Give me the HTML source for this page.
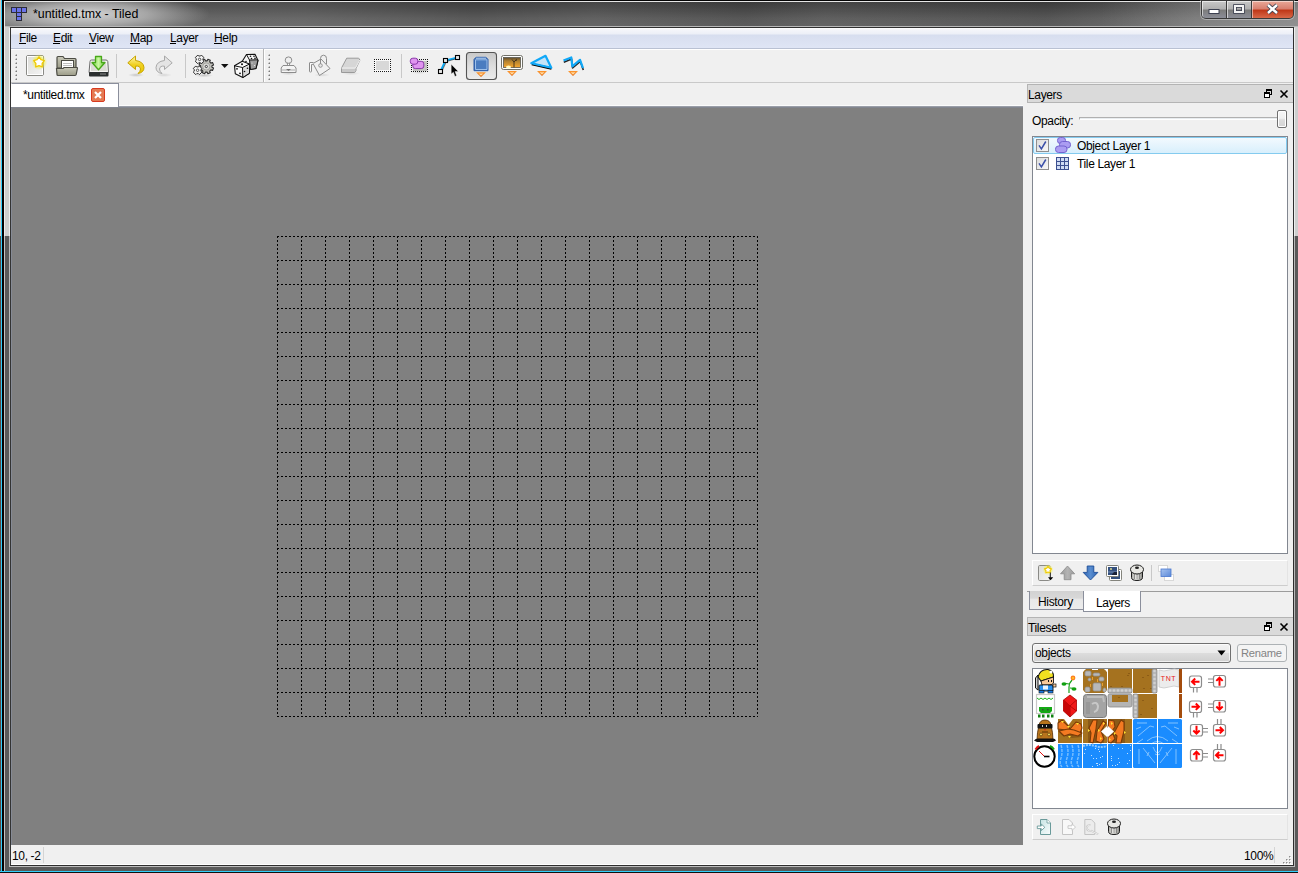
<!DOCTYPE html>
<html><head><meta charset="utf-8">
<style>
*{box-sizing:border-box;margin:0;padding:0}
html,body{width:1298px;height:873px;overflow:hidden}
body{position:relative;background:#626262;font-family:"Liberation Sans",sans-serif;font-size:11.5px;color:#000}
.a{position:absolute}
.t{position:absolute;white-space:nowrap;line-height:14px;font-size:12px;letter-spacing:-0.35px}
svg{position:absolute;overflow:visible}
</style></head><body>

<!-- ===== window frame ===== -->
<div class="a" style="left:0;top:0;width:1298px;height:873px;background:#5a5a5a"></div>
<div class="a" style="left:0;top:0;width:1298px;height:236px;background:#cecece"></div>
<!-- left edge columns -->
<div class="a" style="left:0;top:0;width:1px;height:873px;background:linear-gradient(#dcc8c0 236px,#5a4a46 236px)"></div>
<div class="a" style="left:1px;top:0;width:1px;height:873px;background:#30cdfa"></div>
<div class="a" style="left:2px;top:0;width:2px;height:873px;background:#050000"></div>
<div class="a" style="left:4px;top:0;width:1px;height:873px;background:linear-gradient(#eeeeee 236px,#c4c4c4 236px)"></div>
<div class="a" style="left:9px;top:28px;width:1px;height:839px;background:linear-gradient(#eeeeee 208px,#b8b8b8 208px)"></div>
<div class="a" style="left:10px;top:27px;width:1px;height:839px;background:#333"></div>
<!-- right edge -->
<div class="a" style="left:1293px;top:27px;width:1px;height:839px;background:#2e2e2e"></div>
<div class="a" style="left:1294px;top:28px;width:1px;height:838px;background:linear-gradient(#eeeeee 208px,#b8b8b8 208px)"></div>
<!-- bottom edge -->
<div class="a" style="left:10px;top:865px;width:1284px;height:1px;background:#2e2e2e"></div>
<div class="a" style="left:9px;top:866px;width:1286px;height:1px;background:#bdbdbd"></div>
<div class="a" style="left:0;top:871px;width:1298px;height:1px;background:#30cdfa"></div>
<div class="a" style="left:0;top:872px;width:1298px;height:1px;background:#101010"></div>

<!-- ===== title bar ===== -->
<div class="a" style="left:4px;top:0;width:1294px;height:1px;background:#050505"></div>
<div class="a" style="left:4px;top:1px;width:1294px;height:1px;background:#e6e6e6"></div>
<div class="a" id="title" style="left:5px;top:2px;width:1293px;height:24px;background:linear-gradient(to right,rgba(255,255,255,.08) 0,rgba(255,255,255,.09) 300px,rgba(255,255,255,0) 470px,rgba(255,255,255,.05) 590px,rgba(0,0,0,.03) 740px,rgba(255,255,255,.04) 820px,rgba(0,0,0,.03) 1040px,rgba(255,255,255,.14) 1190px),linear-gradient(#3c3c3c,#484848 30%,#5a5a5a 70%,#5e5e5e)"></div>
<div class="a" style="left:5px;top:26px;width:1293px;height:1px;background:#b8b8b8"></div>
<div class="a" style="left:10px;top:27px;width:1284px;height:1px;background:#303030"></div>

<!-- ===== client area ===== -->
<div class="a" style="left:11px;top:28px;width:1282px;height:837px;background:#f0f0f0"></div>

<!-- menu bar -->
<div class="a" style="left:11px;top:28px;width:1282px;height:20px;background:linear-gradient(#fff 0,#f4f5fa 2px,#eceff7 6px,#d7deef 7px,#dfe5f5 100%)"></div>
<div class="a" style="left:11px;top:48px;width:1282px;height:1px;background:#b9c1d3"></div>
<div class="a" style="left:11px;top:49px;width:1282px;height:1px;background:#fff"></div>

<!-- toolbar bottom -->
<div class="a" style="left:11px;top:82px;width:1282px;height:1px;background:#c9c9c9"></div>

<!-- map view -->
<div class="a" style="left:11px;top:107px;width:1012px;height:738px;background:#808080;border-left:1px solid #858a95;border-top:1px solid #82868f"></div>

<!-- status bar -->
<div class="a" style="left:11px;top:845px;width:1282px;height:20px;background:#f0f0f0"></div>


<!-- grid -->
<svg class="a" style="left:0;top:0" width="1298" height="873" shape-rendering="crispEdges"><path d="M277 236.5H758 M277 260.5H758 M277 284.5H758 M277 308.5H758 M277 332.5H758 M277 356.5H758 M277 380.5H758 M277 404.5H758 M277 428.5H758 M277 452.5H758 M277 476.5H758 M277 500.5H758 M277 524.5H758 M277 548.5H758 M277 572.5H758 M277 596.5H758 M277 620.5H758 M277 644.5H758 M277 668.5H758 M277 692.5H758 M277 716.5H758 M277.5 236V717 M301.5 236V717 M325.5 236V717 M349.5 236V717 M373.5 236V717 M397.5 236V717 M421.5 236V717 M445.5 236V717 M469.5 236V717 M493.5 236V717 M517.5 236V717 M541.5 236V717 M565.5 236V717 M589.5 236V717 M613.5 236V717 M637.5 236V717 M661.5 236V717 M685.5 236V717 M709.5 236V717 M733.5 236V717 M757.5 236V717" stroke="#000" stroke-width="1" stroke-dasharray="2 2" fill="none"/></svg>

<!-- title content -->
<div class="a" style="left:5px;top:2px;width:260px;height:24px;background:radial-gradient(ellipse 125px 21px at 80px 12px,rgba(220,220,220,.95),rgba(195,195,195,.7) 50%,rgba(150,150,150,0) 100%)"></div>
<svg style="left:0;top:0" width="40" height="30" shape-rendering="crispEdges">
<rect x="11" y="7" width="16" height="6" fill="#2c2c38"/><rect x="16" y="12" width="6" height="9" fill="#2c2c38"/>
<rect x="12" y="8" width="4" height="4" fill="#6c74e8"/><rect x="17" y="8" width="4" height="4" fill="#6c74e8"/><rect x="22" y="8" width="4" height="4" fill="#6c74e8"/>
<rect x="17" y="13" width="4" height="3" fill="#6c74e8"/><rect x="17" y="17" width="4" height="3" fill="#6c74e8"/>
</svg>
<div class="t" style="left:33px;top:7px;font-size:12.4px;letter-spacing:0;color:#000">*untitled.tmx - Tiled</div>

<!-- window buttons -->
<div class="a" style="left:1100px;top:2px;width:198px;height:24px;background:linear-gradient(to right,rgba(255,255,255,0),rgba(255,255,255,.12) 60%,rgba(255,255,255,.2))"></div>
<div class="a" style="left:1200px;top:0;width:95px;height:20px;background:rgba(255,255,255,.35);border-radius:0 0 6px 6px"></div>
<div class="a" style="left:1201px;top:0;width:93px;height:19px;background:#3a3a3a;border-radius:0 0 5px 5px"></div>
<div class="a" style="left:1202px;top:1px;width:24px;height:17px;border-radius:0 0 0 4px;background:linear-gradient(#c8c8c8,#b0b0b0 45%,#7c7c7c 55%,#8c8e98);box-shadow:inset 1px 1px 0 rgba(255,255,255,.6)"></div>
<div class="a" style="left:1227px;top:1px;width:24px;height:17px;background:linear-gradient(#c8c8c8,#b0b0b0 45%,#7c7c7c 55%,#8c8e98);box-shadow:inset 1px 1px 0 rgba(255,255,255,.6)"></div>
<div class="a" style="left:1252px;top:1px;width:41px;height:17px;border-radius:0 0 4px 0;background:linear-gradient(#eaa898,#d88070 45%,#c03818 55%,#d86848);box-shadow:inset 1px 1px 0 rgba(255,255,255,.5)"></div>
<svg style="left:0;top:0" width="1298" height="30">
<rect x="1209" y="9.5" width="10" height="4" fill="#fff" stroke="#3c4050" stroke-width="1"/>
<rect x="1235" y="6" width="8" height="6" fill="none" stroke="#3c4050" stroke-width="3.6"/>
<rect x="1235" y="6" width="8" height="6" fill="none" stroke="#f4f4f4" stroke-width="2"/>
<path d="M1268 5L1277 13M1277 5L1268 13" stroke="#3c4050" stroke-width="4.2"/>
<path d="M1268 5L1277 13M1277 5L1268 13" stroke="#fff" stroke-width="2.4"/>
</svg>

<!-- menu -->
<div class="t" style="left:19px;top:31px">File</div>
<div class="t" style="left:53px;top:31px">Edit</div>
<div class="t" style="left:89px;top:31px">View</div>
<div class="t" style="left:130px;top:31px">Map</div>
<div class="t" style="left:170px;top:31px">Layer</div>
<div class="t" style="left:214px;top:31px">Help</div>
<div class="a" style="left:19px;top:43px;width:7px;height:1px;background:#000"></div>
<div class="a" style="left:53px;top:43px;width:7px;height:1px;background:#000"></div>
<div class="a" style="left:89px;top:43px;width:7px;height:1px;background:#000"></div>
<div class="a" style="left:130px;top:43px;width:10px;height:1px;background:#000"></div>
<div class="a" style="left:170px;top:43px;width:6px;height:1px;background:#000"></div>
<div class="a" style="left:214px;top:43px;width:8px;height:1px;background:#000"></div>

<!-- document tab -->
<div class="a" style="left:11px;top:83px;width:108px;height:24px;background:#fff;border:1px solid #8b8f9c;border-bottom:none;border-left-color:#fff"></div>
<div class="a" style="left:119px;top:105px;width:904px;height:1px;background:#fbfbfb"></div><div class="a" style="left:119px;top:106px;width:904px;height:1px;background:#9a9ea8"></div>
<div class="t" style="left:23px;top:88px">*untitled.tmx</div>
<div class="a" style="left:91px;top:88px;width:14px;height:14px;background:#e47a52;border:1px solid #d83a20;border-radius:2px"></div>
<svg style="left:0;top:0" width="120" height="110"><path d="M95 92L101 98M101 92L95 98" stroke="#fff" stroke-width="2.2"/></svg>


<!-- toolbar decorations -->
<div class="a" style="left:263px;top:49px;width:1px;height:33px;background:#b4b4b4"></div>
<div class="a" style="left:264px;top:49px;width:1px;height:33px;background:#fff"></div>
<svg style="left:0;top:0" width="600" height="90" shape-rendering="crispEdges"><rect x="15" y="54" width="2" height="2" fill="#b4b4b4"/><rect x="16" y="55" width="1" height="1" fill="#7c7c7c"/><rect x="15" y="54" width="1" height="1" fill="#e4e4e4"/><rect x="15" y="58" width="2" height="2" fill="#b4b4b4"/><rect x="16" y="59" width="1" height="1" fill="#7c7c7c"/><rect x="15" y="58" width="1" height="1" fill="#e4e4e4"/><rect x="15" y="62" width="2" height="2" fill="#b4b4b4"/><rect x="16" y="63" width="1" height="1" fill="#7c7c7c"/><rect x="15" y="62" width="1" height="1" fill="#e4e4e4"/><rect x="15" y="66" width="2" height="2" fill="#b4b4b4"/><rect x="16" y="67" width="1" height="1" fill="#7c7c7c"/><rect x="15" y="66" width="1" height="1" fill="#e4e4e4"/><rect x="15" y="70" width="2" height="2" fill="#b4b4b4"/><rect x="16" y="71" width="1" height="1" fill="#7c7c7c"/><rect x="15" y="70" width="1" height="1" fill="#e4e4e4"/><rect x="15" y="74" width="2" height="2" fill="#b4b4b4"/><rect x="16" y="75" width="1" height="1" fill="#7c7c7c"/><rect x="15" y="74" width="1" height="1" fill="#e4e4e4"/><rect x="15" y="78" width="2" height="2" fill="#b4b4b4"/><rect x="16" y="79" width="1" height="1" fill="#7c7c7c"/><rect x="15" y="78" width="1" height="1" fill="#e4e4e4"/><rect x="268" y="54" width="2" height="2" fill="#b4b4b4"/><rect x="269" y="55" width="1" height="1" fill="#7c7c7c"/><rect x="268" y="54" width="1" height="1" fill="#e4e4e4"/><rect x="268" y="58" width="2" height="2" fill="#b4b4b4"/><rect x="269" y="59" width="1" height="1" fill="#7c7c7c"/><rect x="268" y="58" width="1" height="1" fill="#e4e4e4"/><rect x="268" y="62" width="2" height="2" fill="#b4b4b4"/><rect x="269" y="63" width="1" height="1" fill="#7c7c7c"/><rect x="268" y="62" width="1" height="1" fill="#e4e4e4"/><rect x="268" y="66" width="2" height="2" fill="#b4b4b4"/><rect x="269" y="67" width="1" height="1" fill="#7c7c7c"/><rect x="268" y="66" width="1" height="1" fill="#e4e4e4"/><rect x="268" y="70" width="2" height="2" fill="#b4b4b4"/><rect x="269" y="71" width="1" height="1" fill="#7c7c7c"/><rect x="268" y="70" width="1" height="1" fill="#e4e4e4"/><rect x="268" y="74" width="2" height="2" fill="#b4b4b4"/><rect x="269" y="75" width="1" height="1" fill="#7c7c7c"/><rect x="268" y="74" width="1" height="1" fill="#e4e4e4"/><rect x="268" y="78" width="2" height="2" fill="#b4b4b4"/><rect x="269" y="79" width="1" height="1" fill="#7c7c7c"/><rect x="268" y="78" width="1" height="1" fill="#e4e4e4"/>
<rect x="116" y="54" width="1" height="24" fill="#c8c8c8"/>
<rect x="185" y="54" width="1" height="24" fill="#c8c8c8"/>
<rect x="401" y="54" width="1" height="24" fill="#c8c8c8"/>
</svg>

<!-- toolbar icons -->
<svg style="left:0;top:0" width="600" height="90">
<defs>
<linearGradient id="gpage" x1="0" y1="0" x2="1" y2="1"><stop offset="0" stop-color="#dcdcd8"/><stop offset="1" stop-color="#f4f4f4"/></linearGradient>
<radialGradient id="gglow"><stop offset="0" stop-color="#f0f040" stop-opacity=".9"/><stop offset=".6" stop-color="#f0f040" stop-opacity=".6"/><stop offset="1" stop-color="#f0f040" stop-opacity="0"/></radialGradient>
<linearGradient id="gfold" x1="0" y1="0" x2="0" y2="1"><stop offset="0" stop-color="#c8c8b8"/><stop offset="1" stop-color="#9c9c88"/></linearGradient>
<linearGradient id="ggreen" x1="0" y1="0" x2="1" y2="0"><stop offset="0" stop-color="#70d040"/><stop offset=".5" stop-color="#c8f8a0"/><stop offset="1" stop-color="#60c030"/></linearGradient>
<linearGradient id="gyel" x1="0" y1="0" x2="0" y2="1"><stop offset="0" stop-color="#fff8b0"/><stop offset=".5" stop-color="#f0d020"/><stop offset="1" stop-color="#e8c800"/></linearGradient>
<radialGradient id="gshadow"><stop offset="0" stop-color="#000" stop-opacity=".18"/><stop offset="1" stop-color="#000" stop-opacity="0"/></radialGradient>
<linearGradient id="gbtn" x1="0" y1="0" x2="0" y2="1"><stop offset="0" stop-color="#c8c8c8"/><stop offset=".5" stop-color="#dedede"/><stop offset="1" stop-color="#ececec"/></linearGradient>
<linearGradient id="gsun" x1="0" y1="0" x2="0" y2="1"><stop offset="0" stop-color="#5a4a30"/><stop offset=".35" stop-color="#b08030"/><stop offset="1" stop-color="#f8a830"/></linearGradient>
<linearGradient id="gorange" x1="0" y1="0" x2="0" y2="1"><stop offset="0" stop-color="#ff9a30"/><stop offset="1" stop-color="#e06000"/></linearGradient>
</defs>
<!-- new -->
<rect x="26.5" y="55.5" width="17" height="20" rx="1.5" fill="url(#gpage)" stroke="#8a8a86"/>
<rect x="27.5" y="56.5" width="15" height="18" fill="none" stroke="#fff"/>
<circle cx="39.2" cy="62.1" r="8" fill="url(#gglow)"/>
<path d="M39.00 56.80L40.94 59.73L44.33 60.67L42.14 63.42L42.29 66.93L39.00 65.70L35.71 66.93L35.86 63.42L33.67 60.67L37.06 59.73Z" fill="#fff" stroke="#f0c800" stroke-width="1.3" stroke-linejoin="round"/>
<!-- open -->
<path d="M57 57.5Q57 56.5 58 56.5H63L64.5 58.5H75Q76 58.5 76 59.5V68H57Z" fill="url(#gfold)" stroke="#4c4c44" stroke-width="1.2"/>
<rect x="61.5" y="60.5" width="12" height="8" fill="#fff" stroke="#4c4c44" stroke-width="1"/>
<path d="M63 63.5H72M63 65.5H72" stroke="#b8b8b8" stroke-width="0.9"/>
<path d="M56.5 68.5H63L64 67.5H77Q77.6 67.5 77.4 68.3L76.2 74.5Q76 75.5 75 75.5H58Q57 75.5 57 74.5Z" fill="url(#gfold)" stroke="#4c4c44" stroke-width="1.2"/>
<!-- save -->
<path d="M90 61.5Q90 60 91.5 60H106Q107.5 60 107.8 61.5L108.5 72.5H89Z" fill="#f6f6f4" stroke="#6c6c6c" stroke-width="1"/>
<path d="M91 63L106 63L107 71H91Z" fill="#dcdcd6"/>
<rect x="89" y="72" width="19.5" height="4.5" rx="1" fill="#2c3030"/>
<rect x="100" y="73.5" width="6" height="1" fill="#8a8a8a"/>
<path d="M95.5 56.5H101.5V62.5H105L98.5 69.8L92 62.5H95.5Z" fill="url(#ggreen)" stroke="#48a818" stroke-width="1.3" stroke-linejoin="round"/>
<!-- undo -->
<ellipse cx="136" cy="75" rx="8" ry="2" fill="url(#gshadow)"/>
<path d="M135.5 56L127.8 62.8L135.5 69.5V66.2Q140 65.5 140.5 69Q140.5 71.5 138 73.5Q144 72.5 144 67.5Q143.5 61.5 135.5 60.5Z" fill="url(#gyel)" stroke="#c8a400" stroke-width="1" stroke-linejoin="round"/>
<!-- redo -->
<ellipse cx="164" cy="75" rx="8" ry="2" fill="url(#gshadow)" opacity=".6"/>
<path d="M164.5 56L172.2 62.8L164.5 69.5V66.2Q160 65.5 159.5 69Q159.5 71.5 162 73.5Q156 72.5 156 67.5Q156.5 61.5 164.5 60.5Z" fill="#e4e4e4" stroke="#a8a8a8" stroke-width="1" stroke-linejoin="round"/>
<!-- gears -->
<ellipse cx="204" cy="75.5" rx="9" ry="1.8" fill="url(#gshadow)"/>
<path d="M211.93 67.37L213.53 68.09L212.53 70.49L210.90 69.87L209.67 71.10L210.29 72.73L207.89 73.73L207.17 72.13L205.43 72.13L204.71 73.73L202.31 72.73L202.93 71.10L201.70 69.87L200.07 70.49L199.07 68.09L200.67 67.37L200.67 65.63L199.07 64.91L200.07 62.51L201.70 63.13L202.93 61.90L202.31 60.27L204.71 59.27L205.43 60.87L207.17 60.87L207.89 59.27L210.29 60.27L209.67 61.90L210.90 63.13L212.53 62.51L213.53 64.91L211.93 65.63Z" fill="#c4c4be" stroke="#2c2c2c" stroke-width="1.1" stroke-linejoin="round"/>
<circle cx="206.3" cy="66.5" r="3.6" fill="#d8d8d4" stroke="#9a9a96" stroke-width=".8"/>
<circle cx="206.3" cy="66.5" r="1.1" fill="#fff" stroke="#303030" stroke-width=".9"/>
<path d="M202.98 60.32L203.94 61.20L201.40 63.74L200.52 62.78L198.68 62.78L197.80 63.74L195.26 61.20L196.22 60.32L196.22 58.48L195.26 57.60L197.80 55.06L198.68 56.02L200.52 56.02L201.40 55.06L203.94 57.60L202.98 58.48Z" fill="#f2f2f2" stroke="#2c2c2c" stroke-width="1" stroke-linejoin="round"/>
<circle cx="199.6" cy="59.4" r="1.2" fill="#fff" stroke="#404040" stroke-width=".9"/>
<path d="M200.98 71.22L201.94 72.10L199.40 74.64L198.52 73.68L196.68 73.68L195.80 74.64L193.26 72.10L194.22 71.22L194.22 69.38L193.26 68.50L195.80 65.96L196.68 66.92L198.52 66.92L199.40 65.96L201.94 68.50L200.98 69.38Z" fill="#f2f2f2" stroke="#2c2c2c" stroke-width="1" stroke-linejoin="round"/>
<circle cx="197.6" cy="70.3" r="1.2" fill="#fff" stroke="#404040" stroke-width=".9"/>
<path d="M221 64H228.5L224.7 68Z" fill="#111"/>
<!-- dice -->
<path d="M241.5 62.5L246.5 54.5L255 54.3L258 60.5L256 68.5L250 69.5Z" fill="#f6f6f6" stroke="#111" stroke-width="1.1" stroke-linejoin="round"/>
<path d="M249.5 60L258 59.8L256 68.5L250.5 69.5Z" fill="#9c9c9c" stroke="#111" stroke-width="1" stroke-linejoin="round"/>
<path d="M246.5 54.5L249.5 60" stroke="#111" stroke-width="1"/>
<g fill="#111"><circle cx="250.5" cy="56.3" r=".8"/><circle cx="254" cy="56.3" r=".8"/><circle cx="251.5" cy="58.5" r=".8"/><circle cx="255" cy="58.4" r=".8"/><circle cx="246" cy="61.5" r=".8"/></g>
<g fill="#eee"><circle cx="252" cy="63" r=".6"/><circle cx="254.5" cy="65.5" r=".6"/></g>
<path d="M234.5 65.8L242.2 61.2L249.5 64V73.2L242.8 77.5L235.3 73.8Z" fill="#fbfbfb" stroke="#111" stroke-width="1.1" stroke-linejoin="round"/>
<path d="M242.5 67.5L249.5 64V73.2L242.8 77.5Z" fill="#dcdcdc" stroke="#111" stroke-width="1" stroke-linejoin="round"/>
<path d="M234.5 65.8L242.5 67.5" stroke="#111" stroke-width="1"/>
<g fill="#111"><circle cx="242" cy="64.3" r="1"/><circle cx="237" cy="68.8" r=".9"/><circle cx="240" cy="73.3" r=".9"/><circle cx="244.5" cy="71.5" r=".8"/><circle cx="247.5" cy="68.3" r=".8"/></g>
<!-- stamp -->
<ellipse cx="288.5" cy="73.5" rx="8" ry="1.8" fill="url(#gshadow)" opacity=".6"/>
<circle cx="288.5" cy="60.2" r="3.3" fill="#f0f0f0" stroke="#8c8c8c" stroke-width="1"/>
<rect x="287.5" y="63.2" width="2" height="3" fill="#fff" stroke="#8c8c8c" stroke-width=".9"/>
<path d="M283 65.5H294L296 68V72.5H281.2V68Z" fill="#f4f4f4" stroke="#8c8c8c" stroke-width="1"/>
<rect x="282" y="69" width="13.5" height="2" fill="#cfcfcf"/>
<path d="M286 69.3H291L288.5 70.8Z" fill="#555"/>
<!-- fill bucket -->
<ellipse cx="322" cy="75" rx="8" ry="1.8" fill="url(#gshadow)" opacity=".6"/>
<path d="M313 63.5L321 59L330 68.5L319.5 75.5Z" fill="#f0f0f0" stroke="#8c8c8c" stroke-width="1" stroke-linejoin="round"/>
<path d="M320.5 65.5V58.5Q320.5 55.2 323.5 55.2Q326.5 55.2 326.5 58.5V64" fill="none" stroke="#8c8c8c" stroke-width="1"/>
<circle cx="320.5" cy="65.5" r="1.8" fill="#e8e8e8" stroke="#8c8c8c" stroke-width=".9"/>
<path d="M313.5 62.5H310Q309.5 62.5 309.5 63V71.5Q309.5 72 310.5 72Q311.5 72 311.5 71.5V64.5L313.5 64.2" fill="#fafafa" stroke="#8c8c8c" stroke-width="1"/>
<!-- eraser -->
<ellipse cx="351" cy="73.5" rx="9" ry="1.8" fill="url(#gshadow)" opacity=".5"/>
<path d="M346.7 58.2H358.3Q360 58.5 359.7 60.5L356 68.5V70.5L354.7 72.5H341.5V68Z" fill="#d6d6d6" stroke="#9a9a9a" stroke-width="1" stroke-linejoin="round"/>
<path d="M341.5 68H355.5L359.7 60" fill="none" stroke="#f4f4f4" stroke-width=".9"/>
<path d="M342 69H355V72H342Z" fill="#c8c8c8"/>
<!-- rect select -->
<rect x="376" y="61" width="13" height="9" fill="#d8d8d8"/>
<rect x="375" y="60" width="15" height="11" fill="none" stroke="#fff" stroke-width="1"/>
<g fill="#1a1a1a" shape-rendering="crispEdges"><rect x="374" y="59" width="1" height="1"/><rect x="374" y="71" width="1" height="1"/><rect x="376" y="59" width="1" height="1"/><rect x="376" y="71" width="1" height="1"/><rect x="378" y="59" width="1" height="1"/><rect x="378" y="71" width="1" height="1"/><rect x="380" y="59" width="1" height="1"/><rect x="380" y="71" width="1" height="1"/><rect x="382" y="59" width="1" height="1"/><rect x="382" y="71" width="1" height="1"/><rect x="384" y="59" width="1" height="1"/><rect x="384" y="71" width="1" height="1"/><rect x="386" y="59" width="1" height="1"/><rect x="386" y="71" width="1" height="1"/><rect x="388" y="59" width="1" height="1"/><rect x="388" y="71" width="1" height="1"/><rect x="390" y="59" width="1" height="1"/><rect x="390" y="71" width="1" height="1"/><rect x="374" y="61" width="1" height="1"/><rect x="390" y="61" width="1" height="1"/><rect x="374" y="63" width="1" height="1"/><rect x="390" y="63" width="1" height="1"/><rect x="374" y="65" width="1" height="1"/><rect x="390" y="65" width="1" height="1"/><rect x="374" y="67" width="1" height="1"/><rect x="390" y="67" width="1" height="1"/><rect x="374" y="69" width="1" height="1"/><rect x="390" y="69" width="1" height="1"/></g>
<!-- object select -->
<ellipse cx="419" cy="72.5" rx="8" ry="1.5" fill="url(#gshadow)" opacity=".6"/>
<rect x="413" y="61" width="14" height="10" fill="#c4c4c0"/>
<g fill="#111" shape-rendering="crispEdges"><rect x="411" y="59" width="1" height="1"/><rect x="411" y="71" width="1" height="1"/><rect x="413" y="59" width="1" height="1"/><rect x="413" y="71" width="1" height="1"/><rect x="415" y="59" width="1" height="1"/><rect x="415" y="71" width="1" height="1"/><rect x="417" y="59" width="1" height="1"/><rect x="417" y="71" width="1" height="1"/><rect x="419" y="59" width="1" height="1"/><rect x="419" y="71" width="1" height="1"/><rect x="421" y="59" width="1" height="1"/><rect x="421" y="71" width="1" height="1"/><rect x="423" y="59" width="1" height="1"/><rect x="423" y="71" width="1" height="1"/><rect x="425" y="59" width="1" height="1"/><rect x="425" y="71" width="1" height="1"/><rect x="427" y="59" width="1" height="1"/><rect x="427" y="71" width="1" height="1"/><rect x="411" y="61" width="1" height="1"/><rect x="427" y="61" width="1" height="1"/><rect x="411" y="63" width="1" height="1"/><rect x="427" y="63" width="1" height="1"/><rect x="411" y="65" width="1" height="1"/><rect x="427" y="65" width="1" height="1"/><rect x="411" y="67" width="1" height="1"/><rect x="427" y="67" width="1" height="1"/><rect x="411" y="69" width="1" height="1"/><rect x="427" y="69" width="1" height="1"/></g>
<rect x="412.8" y="61.3" width="11" height="7.3" rx="2.5" fill="#e094f0" stroke="#8838a8" stroke-width="1"/>
<rect x="410.3" y="58.2" width="7.5" height="6" rx="2.5" fill="#e094f0" stroke="#8838a8" stroke-width="1"/>
<!-- edit polygon -->
<path d="M440.5 71.5L445.5 60.5L457.5 57.5" fill="none" stroke="#10a8f0" stroke-width="2"/>
<path d="M442 71L446.5 61.5L457 58.5" fill="none" stroke="#000" stroke-width=".7" opacity=".7"/>
<g fill="#e8e8e8" stroke="#000" stroke-width="1.1"><rect x="438.5" y="69.5" width="4" height="4"/><rect x="443.5" y="58.5" width="4" height="4"/><rect x="455.5" y="55.5" width="4" height="4"/></g>
<path d="M451.2 64.3V74L453.4 72.2L455 76.4L456.6 75.6L455 71.6L458.3 71.4Z" fill="#000" stroke="#fff" stroke-width=".4"/>
<!-- active button -->
<rect x="466.5" y="52.5" width="30" height="27" rx="3" fill="url(#gbtn)" stroke="#555" stroke-width="1.1"/>
<path d="M476 57.3H486L488 59.5V70.7H474V59.5Z" fill="#3c6eb4" stroke="#2a5aa8" stroke-width="1"/>
<path d="M475.5 59.8H487V69.5H475.5Z" fill="#4a7cc0" stroke="#a8c8ee" stroke-width=".9"/>
<path d="M476 58.2H486" stroke="#c0d8f4" stroke-width="1"/>
<path d="M476 72.3H486L481 77Z" fill="url(#gorange)"/>
<path d="M478.5 73.5H483.5L481 75.8Z" fill="#ffd8a0"/>
<!-- insert image -->
<rect x="501.5" y="55.5" width="21" height="14" rx="2" fill="#fff" stroke="#707068" stroke-width="1"/>
<rect x="503.5" y="57.5" width="17" height="10" fill="url(#gsun)" stroke="#585850" stroke-width=".8"/>
<ellipse cx="508.5" cy="67" rx="2.5" ry="1.5" fill="#fff8c0"/>
<path d="M514 67.3V62L512 59.5M514 62L516.5 59.3M515.2 60.5L517 60" stroke="#3a2a18" stroke-width=".9" fill="none"/>
<path d="M507 71H517L512 76Z" fill="url(#gorange)"/>
<path d="M509.5 72.2H514.5L512 74.8Z" fill="#ffd8a0"/>
<!-- polygon -->
<path d="M532 63.6L545.5 56.5L551 68Z" fill="#c4e4f8"/>
<path d="M531.8 64.2L551.5 68.5" stroke="#000" stroke-width="2.4"/>
<path d="M531.3 63.3L545.5 55.8L551.3 67.8Z" fill="none" stroke="#10a8f8" stroke-width="2.2" stroke-linejoin="round"/>
<path d="M537 71H547L542 76Z" fill="url(#gorange)"/>
<path d="M539.5 72.2H544.5L542 74.8Z" fill="#ffd8a0"/>
<!-- polyline -->
<path d="M563.5 61.3L571.3 58.2L572.3 67L580 60.5L583 69" fill="none" stroke="#000" stroke-width="1.6" stroke-linejoin="round" transform="translate(0.3 0.9)" opacity=".85"/>
<path d="M563.5 60.6L571.3 57.5L572.3 66.3L580 59.8L583 68.2" fill="none" stroke="#10a8f8" stroke-width="2.2" stroke-linejoin="round"/>
<path d="M568 71H578L573 76Z" fill="url(#gorange)"/>
<path d="M570.5 72.2H575.5L573 74.8Z" fill="#ffd8a0"/>
</svg>

<!-- ===== Layers dock ===== -->
<div class="a" style="left:1027px;top:84px;width:266px;height:19px;background:#dadada;border:1px solid #b4b4b4;border-right:none"></div>
<div class="t" style="left:1028px;top:88px">Layers</div>
<svg style="left:0;top:0" width="1298" height="873" shape-rendering="crispEdges">
<g id="floatbtn">
<rect x="1266" y="89" width="5" height="5" fill="none" stroke="#000" stroke-width="1" transform="translate(.5 .5)"/>
<rect x="1266" y="89" width="6" height="2" fill="#000"/>
<rect x="1264" y="92" width="5" height="5" fill="#fff" stroke="#000" stroke-width="1" transform="translate(.5 .5)"/>
<rect x="1264" y="92" width="6" height="2" fill="#000"/>
</g>
</svg>
<svg style="left:0;top:0" width="1298" height="873">
<path d="M1280.5 90.5L1287.5 97.5M1287.5 90.5L1280.5 97.5" stroke="#000" stroke-width="1.6"/>
</svg>
<div class="t" style="left:1032px;top:114px">Opacity:</div>
<div class="a" style="left:1079px;top:117px;width:206px;height:3px;border:1px solid #b0b0b0;border-bottom-color:#fff;border-right-color:#fff;background:#e8ecef"></div>
<div class="a" style="left:1277px;top:110px;width:10px;height:18px;border:1px solid #707070;border-radius:2px;background:linear-gradient(#f6f6f6 0,#f0f0f0 45%,#dcdcdc 55%,#d4d4d4 100%);box-shadow:inset 0 0 0 1px #fff"></div>

<!-- layer list -->
<div class="a" style="left:1032px;top:136px;width:256px;height:418px;background:#fff;border:1px solid #828790"></div>
<div class="a" style="left:1033px;top:137px;width:254px;height:17px;border:1px solid #84cbef;border-radius:2px;background:linear-gradient(#f2f9fe,#d8effc)"></div>
<!-- checkboxes -->
<div class="a" style="left:1036px;top:139px;width:13px;height:13px;border:1px solid #8f8f8f;background:linear-gradient(135deg,#dcdcdc,#f8f8f8)"></div>
<div class="a" style="left:1036px;top:157px;width:13px;height:13px;border:1px solid #8f8f8f;background:linear-gradient(135deg,#dcdcdc,#f8f8f8)"></div>
<svg style="left:0;top:0" width="1298" height="873">
<path d="M1039 145.3L1041.4 148.8L1045.8 141.5" fill="none" stroke="#3a4fa8" stroke-width="1.5"/>
<path d="M1039 163.3L1041.4 166.8L1045.8 159.5" fill="none" stroke="#3a4fa8" stroke-width="1.5"/>
<!-- object layer icon -->
<rect x="1057.5" y="137.5" width="8" height="6" rx="2.8" fill="#ab9df2" stroke="#7464d0" stroke-width="1"/>
<rect x="1059.5" y="141.5" width="11" height="6.5" rx="3" fill="#ab9df2" stroke="#7464d0" stroke-width="1"/>
<rect x="1055.5" y="146" width="11.5" height="6.5" rx="3" fill="#ab9df2" stroke="#7464d0" stroke-width="1"/>
</svg>
<svg style="left:0;top:0" width="1298" height="873" shape-rendering="crispEdges">
<rect x="1056" y="157" width="13" height="13" fill="#3c5090"/>
<g fill="#d0dcf4">
<rect x="1057" y="158" width="3" height="3"/><rect x="1061" y="158" width="3" height="3"/><rect x="1065" y="158" width="3" height="3"/>
<rect x="1057" y="162" width="3" height="3"/><rect x="1061" y="162" width="3" height="3"/><rect x="1065" y="162" width="3" height="3"/>
<rect x="1057" y="166" width="3" height="3"/><rect x="1061" y="166" width="3" height="3"/><rect x="1065" y="166" width="3" height="3"/>
</g>
</svg>
<div class="t" style="left:1077px;top:139px">Object Layer 1</div>
<div class="t" style="left:1077px;top:157px">Tile Layer 1</div>

<!-- layer toolbar -->
<div class="a" style="left:1032px;top:560px;width:256px;height:26px;background:#f0f0f0;border-top:1px solid #fff;border-left:1px solid #fff;border-bottom:1px solid #cdcdcd;border-right:1px solid #e4e4e4"></div>
<div class="a" style="left:1151px;top:565px;width:1px;height:16px;background:#c8c8c8"></div>

<!-- tabs -->
<div class="a" style="left:1027px;top:591px;width:266px;height:1px;background:#9c9c9c"></div>
<div class="a" style="left:1029px;top:591px;width:55px;height:19px;border:1px solid #8b8f9c;border-top:none;background:linear-gradient(#d2d2d2,#d8d8d8 40%,#e8e8e8 45%,#ececec)"></div>
<div class="a" style="left:1083px;top:591px;width:58px;height:21px;border:1px solid #8b8f9c;border-top:none;background:#fff"></div>
<div class="t" style="left:1038px;top:595px">History</div>
<div class="t" style="left:1096px;top:596px">Layers</div>

<!-- ===== Tilesets dock ===== -->
<div class="a" style="left:1027px;top:617px;width:266px;height:19px;background:#dadada;border:1px solid #b4b4b4;border-right:none"></div>
<div class="t" style="left:1028px;top:621px">Tilesets</div>
<svg style="left:0;top:0" width="1298" height="873" shape-rendering="crispEdges">
<g transform="translate(0 533)">
<rect x="1266" y="89" width="5" height="5" fill="none" stroke="#000" stroke-width="1" transform="translate(.5 .5)"/>
<rect x="1266" y="89" width="6" height="2" fill="#000"/>
<rect x="1264" y="92" width="5" height="5" fill="#fff" stroke="#000" stroke-width="1" transform="translate(.5 .5)"/>
<rect x="1264" y="92" width="6" height="2" fill="#000"/>
</g>
</svg>
<svg style="left:0;top:0" width="1298" height="873">
<path d="M1280.5 623.5L1287.5 630.5M1287.5 623.5L1280.5 630.5" stroke="#000" stroke-width="1.6"/>
</svg>
<div class="a" style="left:1032px;top:643px;width:199px;height:20px;border:1px solid #707070;border-radius:3px;background:linear-gradient(#f2f2f2,#ebebeb 50%,#dddddd 51%,#cfcfcf);box-shadow:inset 0 0 0 1px rgba(255,255,255,.7)"></div>
<div class="t" style="left:1035px;top:646px">objects</div>
<svg style="left:0;top:0" width="1298" height="873"><path d="M1217.5 650.5H1225.5L1221.5 655.5Z" fill="#000"/></svg>
<div class="a" style="left:1237px;top:644px;width:50px;height:18px;border:1px solid #adb2b5;border-radius:3px;background:#f4f4f4"></div>
<div class="t" style="left:1241px;top:646px;color:#838383;font-size:11.2px;letter-spacing:-0.25px">Rename</div>

<!-- tileset view -->
<div class="a" style="left:1032px;top:668px;width:256px;height:141px;background:#fff;border:1px solid #828790"></div>

<!-- tileset toolbar -->
<div class="a" style="left:1032px;top:814px;width:256px;height:26px;background:#f0f0f0;border-top:1px solid #fff;border-left:1px solid #fff;border-bottom:1px solid #cdcdcd;border-right:1px solid #e4e4e4"></div>

<!-- status bar -->
<div class="t" style="left:12px;top:849px">10, -2</div>
<div class="a" style="left:43px;top:847px;width:1px;height:16px;background:#d4d4d4"></div>
<div class="t" style="left:1244px;top:849px">100%</div>
<div class="a" style="left:1274px;top:847px;width:1px;height:16px;background:#d4d4d4"></div>
<div class="a" style="left:11px;top:864px;width:1282px;height:1px;background:#fff"></div>
<svg style="left:0;top:0" width="1298" height="873" shape-rendering="crispEdges">
<rect x="1289" y="856" width="2" height="2" fill="#c4c4c4"/><rect x="1289" y="856" width="1" height="1" fill="#8c8c8c"/><rect x="1290" y="857" width="1" height="1" fill="#fff"/><rect x="1286" y="859" width="2" height="2" fill="#c4c4c4"/><rect x="1286" y="859" width="1" height="1" fill="#8c8c8c"/><rect x="1287" y="860" width="1" height="1" fill="#fff"/><rect x="1289" y="859" width="2" height="2" fill="#c4c4c4"/><rect x="1289" y="859" width="1" height="1" fill="#8c8c8c"/><rect x="1290" y="860" width="1" height="1" fill="#fff"/><rect x="1283" y="862" width="2" height="2" fill="#c4c4c4"/><rect x="1283" y="862" width="1" height="1" fill="#8c8c8c"/><rect x="1284" y="863" width="1" height="1" fill="#fff"/><rect x="1286" y="862" width="2" height="2" fill="#c4c4c4"/><rect x="1286" y="862" width="1" height="1" fill="#8c8c8c"/><rect x="1287" y="863" width="1" height="1" fill="#fff"/><rect x="1289" y="862" width="2" height="2" fill="#c4c4c4"/><rect x="1289" y="862" width="1" height="1" fill="#8c8c8c"/><rect x="1290" y="863" width="1" height="1" fill="#fff"/>
</svg>

<!-- layer toolbar icons -->
<svg style="left:0;top:0" width="1298" height="873">
<defs>
<linearGradient id="gblue" x1="0" y1="0" x2="1" y2="0"><stop offset="0" stop-color="#2c62b0"/><stop offset=".5" stop-color="#5a8ed0"/><stop offset="1" stop-color="#2c62b0"/></linearGradient>
<linearGradient id="ggray" x1="0" y1="0" x2="1" y2="0"><stop offset="0" stop-color="#9a9a9a"/><stop offset=".5" stop-color="#b4b4b4"/><stop offset="1" stop-color="#9a9a9a"/></linearGradient>
<linearGradient id="gtrash" x1="0" y1="0" x2="1" y2="0"><stop offset="0" stop-color="#a8a8a4"/><stop offset=".45" stop-color="#f0f0ec"/><stop offset="1" stop-color="#888884"/></linearGradient>
<linearGradient id="gprop" x1="0" y1="0" x2="1" y2="1"><stop offset="0" stop-color="#a8c4f0"/><stop offset="1" stop-color="#5a88d8"/></linearGradient>
<linearGradient id="gteal" x1="0" y1="0" x2="1" y2="1"><stop offset="0" stop-color="#c8e4e4"/><stop offset="1" stop-color="#f8fcfc"/></linearGradient>
</defs>
<!-- new layer -->
<rect x="1038.5" y="565.5" width="11.5" height="15" rx="1.2" fill="url(#gpage)" stroke="#8a8a86" stroke-width="1"/>
<circle cx="1048" cy="569.7" r="5.4" fill="url(#gglow)"/>
<path d="M1048.00 566.30L1049.23 568.20L1051.42 568.79L1050.00 570.55L1050.12 572.81L1048.00 572.00L1045.88 572.81L1046.00 570.55L1044.58 568.79L1046.77 568.20Z" fill="#fff" stroke="#f0c800" stroke-width="1.1" stroke-linejoin="round"/>
<path d="M1050.5 572.5V577.5" stroke="#222" stroke-width=".8"/>
<path d="M1048 577.3H1053.2L1050.6 580.3Z" fill="#000"/>
<!-- up arrow -->
<path d="M1067.5 566L1074.7 573.8H1071V579.7H1064.2V573.8H1060.5Z" fill="url(#ggray)" stroke="#8c8c8c" stroke-width=".8" stroke-linejoin="round"/>
<!-- down arrow -->
<path d="M1087.2 566H1093.8V572.4H1097.9L1090.5 580L1083.2 572.4H1087.2Z" fill="url(#gblue)" stroke="#1e4e98" stroke-width=".9" stroke-linejoin="round"/>
<!-- duplicate -->
<rect x="1109.5" y="569.5" width="12" height="11" rx="1" fill="#fff" stroke="#84847c" stroke-width="1"/>
<rect x="1111" y="571" width="9" height="8" fill="#34507e"/>
<rect x="1106.5" y="565.5" width="12" height="11" rx="1" fill="#fff" stroke="#84847c" stroke-width="1"/>
<rect x="1108" y="567" width="9" height="8" fill="#34507e"/>
<rect x="1108" y="571.5" width="9" height="1" fill="#7890b8"/>
<circle cx="1111" cy="569" r=".9" fill="#f0e890"/>
<path d="M1112 574.5L1114 572H1117V575H1112Z" fill="#1a2238"/>
<!-- trash -->
<path d="M1131.5 572V577.5Q1131.5 580.5 1137 580.5Q1142.5 580.5 1142.5 577.5V572Z" fill="url(#gtrash)" stroke="#1c1c1c" stroke-width="1"/>
<path d="M1134.5 573.5V579M1137 574V579.5M1139.5 573.5V579" stroke="#707070" stroke-width=".7"/>
<ellipse cx="1137" cy="569.5" rx="6.5" ry="4.5" fill="#e8e8e4" stroke="#1c1c1c" stroke-width="1"/>
<ellipse cx="1137" cy="567.8" rx="2" ry="1.2" fill="#222"/>
<!-- properties -->
<rect x="1158.5" y="565.5" width="9" height="6" fill="#fff" stroke="#d8d8d8" stroke-width="1"/>
<rect x="1164.5" y="574.5" width="9" height="6" fill="#fff" stroke="#d8d8d8" stroke-width="1"/>
<rect x="1161" y="569" width="10" height="7.6" fill="url(#gprop)" stroke="#4a78d0" stroke-width=".8"/>

<!-- tileset toolbar icons -->
<path d="M1040.5 819.5H1047L1050.5 823V834.5H1040.5Z" fill="url(#gteal)" stroke="#6a9a9a" stroke-width="1" stroke-linejoin="round"/>
<path d="M1047 819.5V823H1050.5" fill="#fff" stroke="#6a9a9a" stroke-width=".8"/>
<path d="M1037.3 826H1041.3V824L1044.8 827.3L1041.3 830.6V828.6H1037.3Z" fill="#fff" stroke="#6a9a9a" stroke-width=".9" stroke-linejoin="round"/>
<path d="M1062.5 819.5H1069L1072.5 823V834.5H1062.5Z" fill="#f8f8f8" stroke="#c4c4c4" stroke-width="1" stroke-linejoin="round"/>
<path d="M1068 825.8H1072V823.8L1075.5 827.1L1072 830.4V828.4H1068Z" fill="#fff" stroke="#c4c4c4" stroke-width=".9" stroke-linejoin="round"/>
<path d="M1084.8 819.5H1091.3L1094.8 823V834.5H1084.8Z" fill="#ececec" stroke="#c4c4c4" stroke-width="1" stroke-linejoin="round"/>
<path d="M1090.5 825.2Q1087.2 824.5 1086.8 827.5Q1087 831.5 1091 830.8L1098.2 834.3" fill="none" stroke="#c4c4c4" stroke-width="1.8"/>
<path d="M1090.5 825.2Q1087.2 824.5 1086.8 827.5Q1087 831.5 1091 830.8L1098.2 834.3" fill="none" stroke="#f4f4f4" stroke-width=".8"/>
<g transform="translate(-23 254)">
<path d="M1131.5 572V577.5Q1131.5 580.5 1137 580.5Q1142.5 580.5 1142.5 577.5V572Z" fill="url(#gtrash)" stroke="#1c1c1c" stroke-width="1"/>
<path d="M1134.5 573.5V579M1137 574V579.5M1139.5 573.5V579" stroke="#707070" stroke-width=".7"/>
<ellipse cx="1137" cy="569.5" rx="6.5" ry="4.5" fill="#e8e8e4" stroke="#1c1c1c" stroke-width="1"/>
<ellipse cx="1137" cy="567.8" rx="2" ry="1.2" fill="#222"/>
</g>
</svg>

<!-- tiles -->
<svg style="left:0;top:0" width="1298" height="873">
<rect x="1084" y="670" width="22" height="22" rx="2" fill="#a5721f"/>
<path d="M1086 669H1092V670H1098V669H1104L1107 672V690L1104 693H1086L1083 690V672Z" fill="#a5721f"/>
<rect x="1085" y="671" width="6" height="5" rx="1.5" fill="#b8b8b8" stroke="#909090" stroke-width=".8"/>
<rect x="1093" y="673" width="7" height="3" rx="1.5" fill="#b8b8b8" stroke="#909090" stroke-width=".8"/>
<rect x="1088" y="678" width="3" height="3" rx="1.5" fill="#b8b8b8" stroke="#909090" stroke-width=".8"/>
<rect x="1099" y="677" width="5" height="4" rx="1.5" fill="#b8b8b8" stroke="#909090" stroke-width=".8"/>
<rect x="1093" y="683" width="8" height="8" rx="1.5" fill="#b8b8b8" stroke="#909090" stroke-width=".8"/>
<rect x="1085" y="687" width="5" height="5" rx="1.5" fill="#b8b8b8" stroke="#909090" stroke-width=".8"/>
<rect x="1103" y="688" width="3" height="4" rx="1.5" fill="#b8b8b8" stroke="#909090" stroke-width=".8"/>
<rect x="1092" y="677" width="1" height="3" fill="#e8a030"/>
<rect x="1097" y="679" width="1" height="3" fill="#e8a030"/>
<rect x="1102" y="683" width="1" height="3" fill="#e8a030"/>
<rect x="1090" y="684" width="1" height="3" fill="#e8a030"/>
<rect x="1108" y="669" width="24" height="24" fill="#a5721f"/>
<rect x="1117" y="689" width="2" height="1" fill="#8c5c16"/>
<rect x="1127" y="675" width="2" height="1" fill="#8c5c16"/>
<rect x="1121" y="686" width="2" height="1" fill="#8c5c16"/>
<rect x="1128" y="673" width="2" height="1" fill="#8c5c16"/>
<rect x="1110" y="686" width="2" height="1" fill="#8c5c16"/>
<rect x="1108" y="688" width="24" height="5" rx="1.5" fill="#b4b4b4" stroke="#8a8a8a" stroke-width="0.8"/>
<circle cx="1110" cy="690.5" r="1.3" fill="#d0d0d0"/>
<circle cx="1114" cy="690.5" r="1.3" fill="#d0d0d0"/>
<circle cx="1118" cy="690.5" r="1.3" fill="#d0d0d0"/>
<circle cx="1122" cy="690.5" r="1.3" fill="#d0d0d0"/>
<circle cx="1126" cy="690.5" r="1.3" fill="#d0d0d0"/>
<circle cx="1130" cy="690.5" r="1.3" fill="#d0d0d0"/>
<rect x="1133" y="669" width="24" height="24" fill="#a5721f"/>
<rect x="1143" y="688" width="2" height="1" fill="#8c5c16"/>
<rect x="1142" y="677" width="2" height="1" fill="#8c5c16"/>
<rect x="1150" y="688" width="2" height="1" fill="#8c5c16"/>
<rect x="1152" y="686" width="2" height="1" fill="#8c5c16"/>
<rect x="1147" y="675" width="2" height="1" fill="#8c5c16"/>
<rect x="1152" y="669" width="5" height="24" rx="1.5" fill="#b4b4b4" stroke="#8a8a8a" stroke-width="0.8"/>
<circle cx="1154.5" cy="671" r="1.3" fill="#d0d0d0"/>
<circle cx="1154.5" cy="675" r="1.3" fill="#d0d0d0"/>
<circle cx="1154.5" cy="679" r="1.3" fill="#d0d0d0"/>
<circle cx="1154.5" cy="683" r="1.3" fill="#d0d0d0"/>
<circle cx="1154.5" cy="687" r="1.3" fill="#d0d0d0"/>
<circle cx="1154.5" cy="691" r="1.3" fill="#d0d0d0"/>
<rect x="1108" y="694" width="24" height="13" rx="2" fill="#b4b4b4" stroke="#8a8a8a" stroke-width=".8"/>
<rect x="1112" y="695" width="16" height="7" fill="#a5721f"/>
<rect x="1118" y="697" width="2" height="1" fill="#8c5c16"/>
<rect x="1133" y="694" width="24" height="24" fill="#a5721f"/>
<rect x="1142" y="700" width="2" height="1" fill="#8c5c16"/>
<rect x="1151" y="708" width="2" height="1" fill="#8c5c16"/>
<rect x="1135" y="698" width="2" height="1" fill="#8c5c16"/>
<rect x="1140" y="714" width="2" height="1" fill="#8c5c16"/>
<rect x="1136" y="705" width="2" height="1" fill="#8c5c16"/>
<rect x="1133" y="694" width="5" height="24" rx="1.5" fill="#b4b4b4" stroke="#8a8a8a" stroke-width="0.8"/>
<circle cx="1135.5" cy="696" r="1.3" fill="#d0d0d0"/>
<circle cx="1135.5" cy="700" r="1.3" fill="#d0d0d0"/>
<circle cx="1135.5" cy="704" r="1.3" fill="#d0d0d0"/>
<circle cx="1135.5" cy="708" r="1.3" fill="#d0d0d0"/>
<circle cx="1135.5" cy="712" r="1.3" fill="#d0d0d0"/>
<circle cx="1135.5" cy="716" r="1.3" fill="#d0d0d0"/>
<rect x="1083.5" y="694.5" width="23" height="23" rx="3" fill="#a4a4a4" stroke="#7c7c7c" stroke-width="1"/>
<path d="M1087 697H1103L1104 702" fill="none" stroke="#bebebe" stroke-width="2"/>
<path d="M1092 704Q1097 701 1098 706Q1098 711 1094 712" fill="none" stroke="#c8c8c8" stroke-width="2"/>
<rect x="1086" y="702" width="4" height="12" fill="#989898"/>
<path d="M1159 670Q1164 672 1169 670Q1175 668 1179 670V687Q1174 685 1169 687Q1164 689 1159 687Z" fill="#ececec" stroke="#c8c8c8" stroke-width=".8"/>
<text x="1168.5" y="681" font-family="Liberation Sans" font-size="7" fill="#e81818" text-anchor="middle" letter-spacing="0.6">TNT</text>
<rect x="1179" y="669" width="3" height="24" fill="#a44c0c"/>
<rect x="1179" y="694" width="3" height="24" fill="#a44c0c"/>
<rect x="1189.5" y="676.0" width="12" height="11.5" rx="2.2" fill="#fff" stroke="#8c8c8c" stroke-width="1.2"/>
<path d="M1199.5 681.7H1192.5 M1195.2 678.5L1192.0 681.7L1195.2 684.9000000000001" fill="none" stroke="#f00" stroke-width="2"/>
<path d="M1193.5 687.5V692.5M1197 687.5V692.5" stroke="#8c8c8c" stroke-width="1.2"/>
<rect x="1213.5" y="675.5" width="12" height="11.5" rx="2.2" fill="#fff" stroke="#8c8c8c" stroke-width="1.2"/>
<path d="M1219.5 685.7V678.2 M1216.3 680.9000000000001L1219.5 677.7L1222.7 680.9000000000001" fill="none" stroke="#f00" stroke-width="2"/>
<path d="M1208 679H1213M1208 682.5H1213" stroke="#8c8c8c" stroke-width="1.2"/>
<rect x="1189.5" y="701.0" width="12" height="11.5" rx="2.2" fill="#fff" stroke="#8c8c8c" stroke-width="1.2"/>
<path d="M1191.5 706.7H1198.5 M1195.8 703.5L1199.0 706.7L1195.8 709.9000000000001" fill="none" stroke="#f00" stroke-width="2"/>
<path d="M1193.5 712.5V717.5M1197 712.5V717.5" stroke="#8c8c8c" stroke-width="1.2"/>
<rect x="1213.5" y="700.5" width="12" height="11.5" rx="2.2" fill="#fff" stroke="#8c8c8c" stroke-width="1.2"/>
<path d="M1219.5 701.7V709.2 M1216.3 706.5L1219.5 709.7L1222.7 706.5" fill="none" stroke="#f00" stroke-width="2"/>
<path d="M1208 704H1213M1208 707.5H1213" stroke="#8c8c8c" stroke-width="1.2"/>
<rect x="1190.5" y="724.5" width="12" height="11.5" rx="2.2" fill="#fff" stroke="#8c8c8c" stroke-width="1.2"/>
<path d="M1196.5 725.7V733.2 M1193.3 730.5L1196.5 733.7L1199.7 730.5" fill="none" stroke="#f00" stroke-width="2"/>
<path d="M1203 728.5H1208M1203 732H1208" stroke="#8c8c8c" stroke-width="1.2"/>
<rect x="1213.5" y="724.5" width="12" height="11.5" rx="2.2" fill="#fff" stroke="#8c8c8c" stroke-width="1.2"/>
<path d="M1215.5 730.2H1222.5 M1219.8 727.0L1223.0 730.2L1219.8 733.4000000000001" fill="none" stroke="#f00" stroke-width="2"/>
<path d="M1217.5 719V724M1221 719V724" stroke="#8c8c8c" stroke-width="1.2"/>
<rect x="1190.5" y="749.5" width="12" height="11.5" rx="2.2" fill="#fff" stroke="#8c8c8c" stroke-width="1.2"/>
<path d="M1196.5 759.7V752.2 M1193.3 754.9000000000001L1196.5 751.7L1199.7 754.9000000000001" fill="none" stroke="#f00" stroke-width="2"/>
<path d="M1203 753.5H1208M1203 757H1208" stroke="#8c8c8c" stroke-width="1.2"/>
<rect x="1213.5" y="749.5" width="12" height="11.5" rx="2.2" fill="#fff" stroke="#8c8c8c" stroke-width="1.2"/>
<path d="M1223.5 755.2H1216.5 M1219.2 752.0L1216.0 755.2L1219.2 758.4000000000001" fill="none" stroke="#f00" stroke-width="2"/>
<path d="M1217.5 744V749M1221 744V749" stroke="#8c8c8c" stroke-width="1.2"/>
<rect x="1058" y="719" width="24" height="24" fill="#a5721f"/>
<path d="M1058 722L1062 720L1070 729L1076 723L1082 725V737L1072 738L1062 735L1058 731Z" fill="#8a5a18"/>
<path d="M1058 723L1062 720L1068 726L1070 729L1066 730L1058 729Z" fill="#f47a22" stroke="#7a3a06" stroke-width="1.1" stroke-linejoin="round"/>
<path d="M1070 729L1076 722L1081 724L1082 728L1080 733L1072 735L1074 731Z" fill="#f47a22" stroke="#7a3a06" stroke-width="1.1" stroke-linejoin="round"/>
<path d="M1059 731L1068 729L1074 730L1082 733L1078 736L1070 734L1064 736Z" fill="#f47a22" stroke="#7a3a06" stroke-width="1.1" stroke-linejoin="round"/>
<path d="M1064 719L1068.5 725L1073 719Z" fill="#fff"/>
<path d="M1061 721l1.5 2l1.5 -2z" fill="#ffe030"/>
<path d="M1067 726l1.5 2l1.5 -2z" fill="#ffe030"/>
<path d="M1076 723l1.5 2l1.5 -2z" fill="#ffe030"/>
<path d="M1068 736l1.5 2l1.5 -2z" fill="#ffe030"/>
<rect x="1083" y="719" width="24" height="24" fill="#a5721f"/>
<path d="M1088 719H1104V743H1088Z" fill="#8a5a18"/>
<path d="M1093 720L1097 720L1096 729L1093 743L1090 742L1091 733L1089 728Z" fill="#f47a22" stroke="#7a3a06" stroke-width="1.1" stroke-linejoin="round"/>
<path d="M1097 731L1103 721L1106 723L1101 731L1104 739L1101 743L1096 741Z" fill="#f47a22" stroke="#7a3a06" stroke-width="1.1" stroke-linejoin="round"/>
<path d="M1107 726L1101 731.5L1107 737Z" fill="#fff"/>
<path d="M1088 729l2 1.5l-2 1.5z" fill="#ffe030"/>
<path d="M1098 729l2 1.5l-2 1.5z" fill="#ffe030"/>
<path d="M1103 722l2 1.5l-2 1.5z" fill="#ffe030"/>
<path d="M1100 737l2 1.5l-2 1.5z" fill="#ffe030"/>
<rect x="1108" y="719" width="24" height="24" fill="#a5721f"/>
<path d="M1108 719H1125V743H1108Z" fill="#8a5a18"/>
<path d="M1109 720L1114 721L1115 727L1112 731L1108 727Z" fill="#f47a22" stroke="#7a3a06" stroke-width="1.1" stroke-linejoin="round"/>
<path d="M1114 733L1121 720L1124 722L1124 731L1121 743L1116 743L1117 736Z" fill="#f47a22" stroke="#7a3a06" stroke-width="1.1" stroke-linejoin="round"/>
<path d="M1108 737L1113 734L1115 739L1111 743L1108 742Z" fill="#f47a22" stroke="#7a3a06" stroke-width="1.1" stroke-linejoin="round"/>
<path d="M1108 726L1114 731.5L1108 737Z" fill="#fff"/>
<path d="M1111 722l2 1.5l-2 1.5z" fill="#ffe030"/>
<path d="M1114 732l2 1.5l-2 1.5z" fill="#ffe030"/>
<path d="M1124 731l2 1.5l-2 1.5z" fill="#ffe030"/>
<path d="M1109 738l2 1.5l-2 1.5z" fill="#ffe030"/>
<rect x="1058" y="744" width="24" height="24" fill="#1a8cff"/>
<path d="M1061 745Q1063 752 1061 758T1062 767" fill="none" stroke="#8cc8ff" stroke-width="1.4" stroke-dasharray="3 1" opacity=".85"/>
<path d="M1067 745Q1069 752 1067 758T1068 767" fill="none" stroke="#8cc8ff" stroke-width="1.4" stroke-dasharray="3 1" opacity=".85"/>
<path d="M1072 745Q1074 752 1072 758T1073 767" fill="none" stroke="#8cc8ff" stroke-width="1.4" stroke-dasharray="3 1" opacity=".85"/>
<path d="M1078 745Q1080 752 1078 758T1079 767" fill="none" stroke="#8cc8ff" stroke-width="1.4" stroke-dasharray="3 1" opacity=".85"/>
<rect x="1083" y="744" width="24" height="24" fill="#1a8cff"/>
<rect x="1084" y="753" width="1" height="1" fill="#c0e0ff"/>
<rect x="1099" y="764" width="1" height="1" fill="#c0e0ff"/>
<rect x="1096" y="758" width="1" height="1" fill="#c0e0ff"/>
<rect x="1096" y="763" width="1" height="1" fill="#c0e0ff"/>
<rect x="1098" y="749" width="1" height="1" fill="#c0e0ff"/>
<rect x="1095" y="748" width="1" height="1" fill="#c0e0ff"/>
<rect x="1085" y="749" width="1" height="1" fill="#c0e0ff"/>
<rect x="1099" y="751" width="1" height="1" fill="#c0e0ff"/>
<rect x="1092" y="766" width="1" height="1" fill="#c0e0ff"/>
<rect x="1097" y="765" width="1" height="1" fill="#c0e0ff"/>
<rect x="1093" y="758" width="1" height="1" fill="#c0e0ff"/>
<rect x="1100" y="757" width="1" height="1" fill="#c0e0ff"/>
<rect x="1102" y="756" width="1" height="1" fill="#c0e0ff"/>
<rect x="1101" y="763" width="1" height="1" fill="#c0e0ff"/>
<rect x="1097" y="763" width="1" height="1" fill="#c0e0ff"/>
<rect x="1091" y="755" width="1" height="1" fill="#c0e0ff"/>
<path d="M1083 746Q1089 744 1095 746T1107 746" fill="none" stroke="#8cc8ff" stroke-width="2" stroke-dasharray="2 1"/>
<rect x="1108" y="744" width="24" height="24" fill="#1a8cff"/>
<rect x="1130" y="745" width="1" height="1" fill="#c0e0ff"/>
<rect x="1117" y="764" width="1" height="1" fill="#c0e0ff"/>
<rect x="1130" y="750" width="1" height="1" fill="#c0e0ff"/>
<rect x="1119" y="762" width="1" height="1" fill="#c0e0ff"/>
<rect x="1127" y="763" width="1" height="1" fill="#c0e0ff"/>
<rect x="1112" y="765" width="1" height="1" fill="#c0e0ff"/>
<rect x="1115" y="765" width="1" height="1" fill="#c0e0ff"/>
<rect x="1127" y="753" width="1" height="1" fill="#c0e0ff"/>
<rect x="1118" y="748" width="1" height="1" fill="#c0e0ff"/>
<rect x="1111" y="760" width="1" height="1" fill="#c0e0ff"/>
<rect x="1129" y="760" width="1" height="1" fill="#c0e0ff"/>
<rect x="1111" y="756" width="1" height="1" fill="#c0e0ff"/>
<rect x="1111" y="758" width="1" height="1" fill="#c0e0ff"/>
<rect x="1113" y="745" width="1" height="1" fill="#c0e0ff"/>
<rect x="1118" y="758" width="1" height="1" fill="#c0e0ff"/>
<rect x="1122" y="748" width="1" height="1" fill="#c0e0ff"/>
<rect x="1133" y="719" width="49" height="49" rx="1.5" fill="#1a8cff"/>
<path d="M1137 723H1147" fill="none" stroke="#8cc8ff" stroke-width="1" opacity=".9"/>
<path d="M1168 723H1178" fill="none" stroke="#8cc8ff" stroke-width="1" opacity=".9"/>
<path d="M1138 736L1150 726L1154 727" fill="none" stroke="#8cc8ff" stroke-width="1" opacity=".9"/>
<path d="M1177 736L1165 726L1161 727" fill="none" stroke="#8cc8ff" stroke-width="1" opacity=".9"/>
<path d="M1147 741Q1157.5 732 1168 741" fill="none" stroke="#8cc8ff" stroke-width="1" opacity=".9"/>
<path d="M1151 744Q1157.5 739 1164 744" fill="none" stroke="#8cc8ff" stroke-width="1" opacity=".9"/>
<path d="M1155 754Q1157.5 756 1160 754" fill="none" stroke="#8cc8ff" stroke-width="1" opacity=".9"/>
<path d="M1153 747Q1157.5 759 1162 747" fill="none" stroke="#8cc8ff" stroke-width="1" opacity=".9"/>
<path d="M1139 749V764" fill="none" stroke="#8cc8ff" stroke-width="1" opacity=".9"/>
<path d="M1176 749V764" fill="none" stroke="#8cc8ff" stroke-width="1" opacity=".9"/>
<path d="M1143 748L1155 763" fill="none" stroke="#8cc8ff" stroke-width="1" opacity=".9"/>
<path d="M1172 748L1160 763" fill="none" stroke="#8cc8ff" stroke-width="1" opacity=".9"/>
<path d="M1136 729L1141 727" fill="none" stroke="#8cc8ff" stroke-width="1" opacity=".9"/>
<path d="M1179 729L1174 727" fill="none" stroke="#8cc8ff" stroke-width="1" opacity=".9"/>
<path d="M1137 743L1143 739" fill="none" stroke="#8cc8ff" stroke-width="1" opacity=".9"/>
<path d="M1178 743L1172 739" fill="none" stroke="#8cc8ff" stroke-width="1" opacity=".9"/>
<path d="M1149 752L1147 756" fill="none" stroke="#8cc8ff" stroke-width="1" opacity=".9"/>
<path d="M1166 752L1168 756" fill="none" stroke="#8cc8ff" stroke-width="1" opacity=".9"/>
<rect x="1157" y="719" width="1" height="49" fill="#fff"/><rect x="1133" y="743" width="49" height="1" fill="#fff"/>
<path d="M1035.5 678L1038 675V690L1035.5 688Z" fill="#d0d0d0" stroke="#111" stroke-width="1"/>
<path d="M1038 677Q1040 669 1048 669.5Q1054 671 1053.5 677L1041 681Z" fill="#f0e020" stroke="#111" stroke-width="1.1"/>
<circle cx="1051" cy="672" r="1.5" fill="#fff"/>
<path d="M1041 681L1053.5 677V683Q1053 685 1048 685H1042Z" fill="#f8c898" stroke="#111" stroke-width=".9"/>
<rect x="1048" y="680" width="1" height="2" fill="#111"/><rect x="1051" y="680" width="1" height="2" fill="#111"/>
<rect x="1039" y="685" width="14" height="6" rx="1" fill="#2890f0" stroke="#111" stroke-width=".9"/>
<rect x="1043" y="685.5" width="5" height="4" fill="#e8f4ff"/>
<rect x="1053" y="684" width="3" height="3" fill="#f8c898" stroke="#111" stroke-width=".7"/>
<rect x="1039" y="690.5" width="5" height="2.5" fill="#1878e0" stroke="#111" stroke-width=".6"/><rect x="1048" y="690.5" width="5" height="2.5" fill="#1878e0" stroke="#111" stroke-width=".6"/>
<path d="M1069 693V687Q1069 683 1072 680M1069 684Q1066 683 1063 684M1070 688Q1073 688 1075 689" fill="none" stroke="#18a018" stroke-width="1.2"/>
<ellipse cx="1064" cy="684" rx="2.5" ry="1.8" fill="#10a010"/><ellipse cx="1074" cy="689" rx="2.5" ry="1.8" fill="#10a010"/>
<circle cx="1073" cy="678" r="2.4" fill="#ff8020"/><circle cx="1073" cy="678" r="1" fill="#ffd020"/>
<rect x="1036.5" y="694.5" width="18" height="19" fill="#fff" stroke="#c8c8c8" stroke-width="1.2"/>
<path d="M1037 698l2 1.5l2 -1.5l2 1.5l2 -1.5l2 1.5l2 -1.5l2 1.5l2 -1.5" fill="none" stroke="#18b018" stroke-width="1"/>
<path d="M1039 707H1052V711L1050 713H1041L1039 711Z" fill="#14a814"/>
<rect x="1042" y="709" width="1.5" height="1.5" fill="#404040"/><rect x="1047" y="709" width="1.5" height="1.5" fill="#404040"/>
<rect x="1038" y="714.5" width="2.5" height="3" fill="#108010"/>
<rect x="1042" y="714.5" width="2.5" height="3" fill="#108010"/>
<rect x="1047" y="714.5" width="2.5" height="3" fill="#108010"/>
<rect x="1051" y="714.5" width="2.5" height="3" fill="#108010"/>
<path d="M1070 695L1076.5 700V711L1070 717L1063.5 711V700Z" fill="#f01818" stroke="#a80000" stroke-width=".8"/>
<path d="M1063.5 700L1070 706L1076.5 700M1070 706V717M1063.5 711L1070 706L1076.5 711" fill="none" stroke="#a00000" stroke-width=".7"/>
<path d="M1063.5 700L1070 706V717L1063.5 711Z" fill="#c80808"/>
<path d="M1037 740Q1037 733 1039 725Q1040 720 1045 720Q1050 720 1051 725Q1053 733 1053 740Z" fill="#b8741c" stroke="#502800" stroke-width=".8"/>
<rect x="1037.5" y="724" width="15" height="4.5" rx="1" fill="#111"/>
<rect x="1042" y="725" width="1" height="2" fill="#ccc"/><rect x="1046" y="725" width="1" height="2" fill="#ccc"/>
<path d="M1044 729h2l-1 2z" fill="#e02020"/>
<circle cx="1041" cy="734.5" r="1.4" fill="#f8e060" stroke="#402000" stroke-width=".6"/><circle cx="1049" cy="734.5" r="1.4" fill="#f8e060" stroke="#402000" stroke-width=".6"/>
<path d="M1042 732H1048" stroke="#402000" stroke-width=".8"/>
<path d="M1034 740.5Q1036 738 1039 738.5H1052Q1055 738 1056 740.5L1053 742H1037Z" fill="#111"/>
<circle cx="1044.5" cy="756.5" r="10.2" fill="#fff" stroke="#000" stroke-width="2"/>
<path d="M1035.5 749.5Q1037 747 1039 746" fill="none" stroke="#e01010" stroke-width="2"/>
<path d="M1050 746Q1052.5 747 1054 749.5" fill="none" stroke="#10a010" stroke-width="2"/>
<path d="M1044.5 756.5L1039 751" stroke="#e01010" stroke-width="1"/>
<path d="M1044 756.5H1049.5" stroke="#000" stroke-width="1.6"/>
</svg>
</body></html>
